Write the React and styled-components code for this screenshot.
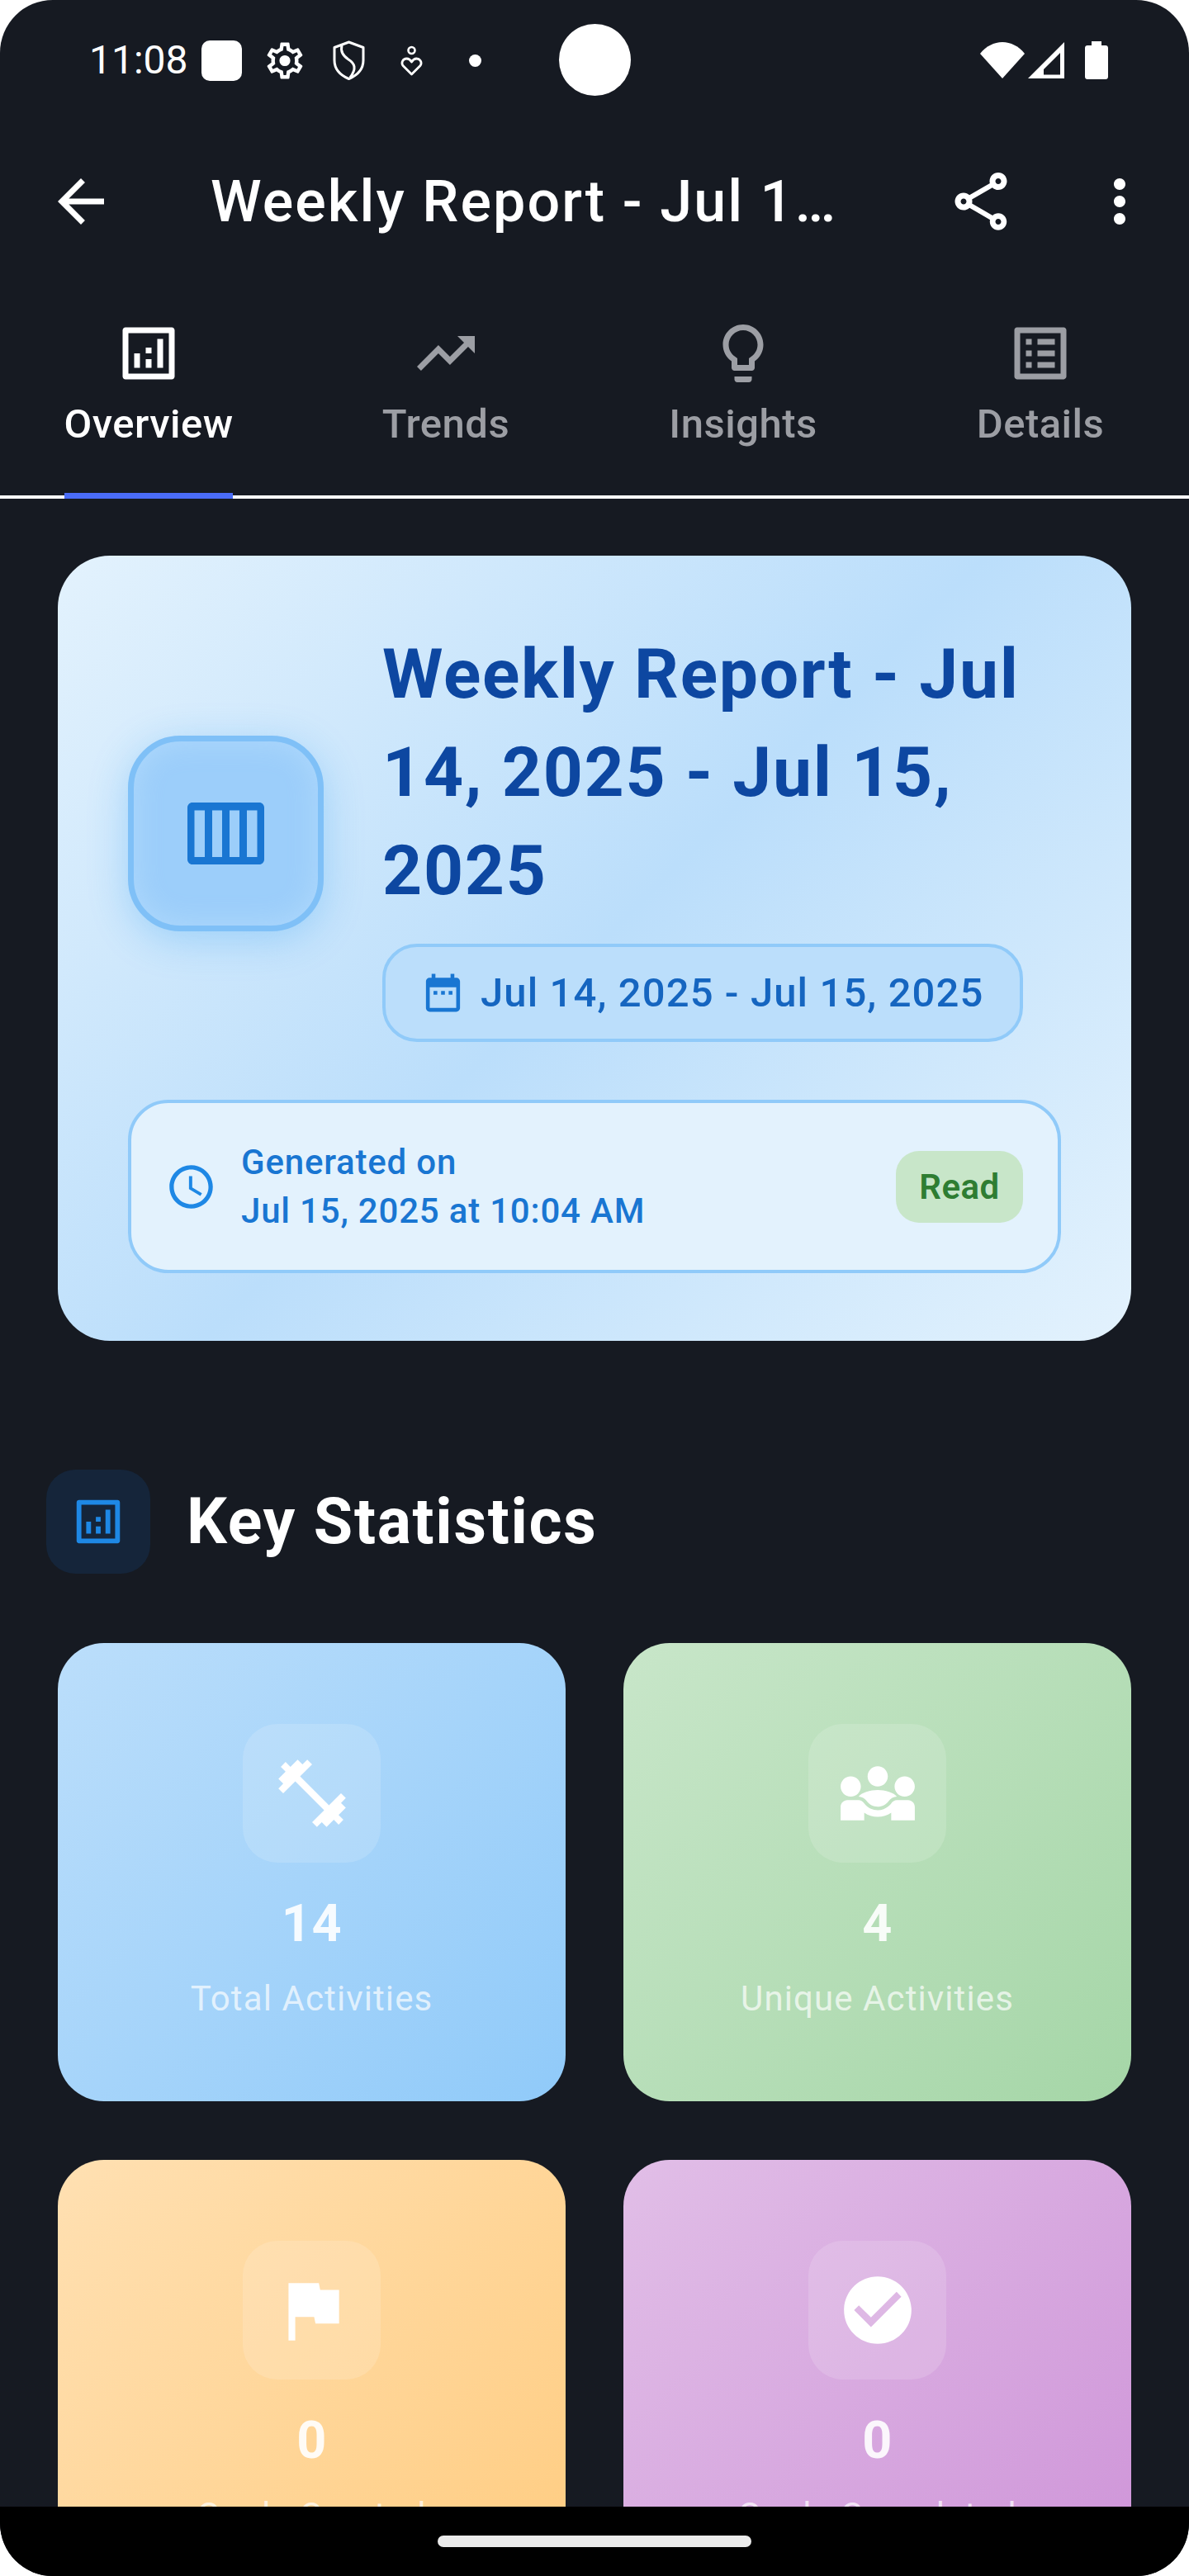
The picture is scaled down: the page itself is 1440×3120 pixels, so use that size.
import React from 'react'
import styled, { createGlobalStyle } from 'styled-components'

const GlobalStyle = createGlobalStyle`
  html, body {
    margin: 0;
    padding: 0;
    background: #fff;
  }
  * {
    box-sizing: border-box;
  }
`

const Phone = styled.div`
  position: relative;
  width: 1440px;
  height: 3120px;
  overflow: hidden;
  border-radius: 64px;
  background: #161a22;
  color: #fff;
  font-family: Roboto, "Noto Sans", sans-serif;
`

const Glyph = styled.svg`
  display: block;
  flex: none;
  width: ${p => p.$w}px;
  height: ${p => p.$h || p.$w}px;
  margin-left: ${p => p.$ml || 0}px;
  fill: ${p => p.$color || '#fff'};
`

const StatusBar = styled.div`
  display: flex;
  align-items: center;
  height: 146px;
  padding: 0 98px 0 108px;
`

const Time = styled.span`
  font-size: 48px;
  line-height: 56px;
  width: 120px;
`

const NotifSquare = styled.span`
  width: 49px;
  height: 49px;
  margin-left: 16px;
  border-radius: 10px;
  background: #fff;
`

const NotifDot = styled.span`
  width: 15px;
  height: 15px;
  margin-left: 56px;
  border-radius: 50%;
  background: #fff;
`

const Camera = styled.div`
  position: absolute;
  left: 677px;
  top: 29px;
  width: 87px;
  height: 87px;
  border-radius: 50%;
  background: #fff;
`

const StatusRight = styled.div`
  display: flex;
  align-items: center;
  margin-left: auto;
`

const AppBar = styled.div`
  display: flex;
  align-items: center;
  height: 196px;
  padding: 0 42px 0 56px;
`

const AppTitle = styled.div`
  width: 752px;
  margin-left: 115px;
  margin-right: 139px;
  white-space: nowrap;
  font-size: 70px;
  font-weight: 500;
  line-height: 84px;
  letter-spacing: 2.1px;
`

const TabBar = styled.div`
  display: grid;
  grid-template-columns: repeat(4, 1fr);
  height: 262px;
  border-bottom: 4px solid #fff;
`

const Tab = styled.div`
  position: relative;
  display: flex;
  flex-direction: column;
  align-items: center;
  padding-top: 44px;
  color: ${p => (p.$active ? '#fff' : '#9c9ea4')};
`

const TabLabel = styled.span`
  margin-top: 12px;
  font-size: 49px;
  font-weight: 500;
  line-height: 64px;
  letter-spacing: 0.5px;
`

const TabIndicator = styled.span`
  position: absolute;
  left: 78px;
  bottom: -4px;
  width: 204px;
  height: 7px;
  background: #4a6cf7;
`

const HeroCard = styled.section`
  margin: 69px 70px 0;
  padding: 84px 85px 82px;
  height: 951px;
  border-radius: 63px;
  background: linear-gradient(135deg, #e3f2fd 0%, #bbdefb 50%, #e3f2fd 100%);
`

const HeroTop = styled.div`
  display: flex;
  align-items: center;
`

const HeroIcon = styled.div`
  display: flex;
  flex: none;
  align-items: center;
  justify-content: center;
  width: 237px;
  height: 237px;
  border: 7px solid #7fc0f7;
  border-radius: 63px;
  background: #9ccefa;
  box-shadow: inset 0 0 36px rgba(200, 230, 255, 0.45), 0 10px 48px rgba(33, 150, 243, 0.28);
`

const HeroText = styled.div`
  display: flex;
  flex-direction: column;
  align-items: flex-start;
  margin-left: 71px;
  width: 822px;
`

const HeroTitle = styled.h1`
  margin: 0;
  font-size: 84px;
  font-weight: 700;
  line-height: 119px;
  letter-spacing: 1.7px;
  color: #0d47a1;
`

const DateChip = styled.div`
  display: flex;
  align-items: center;
  height: 119px;
  margin-top: 29px;
  padding: 0 44px 0 42px;
  border: 4px solid #90caf9;
  border-radius: 42px;
  background: #bbdefb;
  font-size: 49px;
  font-weight: 500;
  color: #1565c0;
`

const ChipText = styled.span`
  margin-left: 18px;
  letter-spacing: 1.1px;
`

const InfoBox = styled.div`
  display: flex;
  align-items: center;
  height: 210px;
  margin-top: 70px;
  padding: 0 42px 0 41px;
  border: 4px solid #90caf9;
  border-radius: 49px;
  background: #e3f2fd;
`

const InfoText = styled.div`
  margin-left: 29px;
  font-size: 42px;
  font-weight: 500;
  line-height: 59px;
  letter-spacing: 0.8px;
  color: #1976d2;
`

const ReadBadge = styled.span`
  display: flex;
  align-items: center;
  justify-content: center;
  width: 154px;
  height: 87px;
  margin-left: auto;
  border-radius: 28px;
  background: #c8e6c9;
  font-size: 42px;
  font-weight: 600;
  letter-spacing: 0.5px;
  color: #2e7d32;
`

const SectionHeader = styled.div`
  display: flex;
  align-items: center;
  margin: 156px 56px 0;
`

const SectionIcon = styled.div`
  display: flex;
  align-items: center;
  justify-content: center;
  width: 126px;
  height: 126px;
  border-radius: 35px;
  background: #15253a;
`

const SectionTitle = styled.h2`
  margin: 0 0 0 44px;
  font-size: 77px;
  font-weight: 700;
  line-height: 90px;
  letter-spacing: 1.7px;
`

const StatGrid = styled.div`
  display: grid;
  grid-template-columns: repeat(2, 615px);
  gap: 71px 70px;
  margin: 84px 70px 0;
`

const StatCard = styled.div`
  display: flex;
  flex-direction: column;
  align-items: center;
  height: 555px;
  padding-top: 98px;
  border-radius: 56px;
  background: linear-gradient(135deg, ${p => p.$from}, ${p => p.$to});
`

const StatIcon = styled.div`
  display: flex;
  align-items: center;
  justify-content: center;
  width: 167px;
  height: 168px;
  border-radius: 42px;
  background: rgba(255, 255, 255, 0.15);
`

const StatValue = styled.div`
  margin-top: 32px;
  font-size: 63px;
  font-weight: 700;
  line-height: 84px;
  letter-spacing: 0.5px;
  color: rgba(255, 255, 255, 0.9);
`

const StatLabel = styled.div`
  margin-top: 21px;
  font-size: 42px;
  line-height: 56px;
  letter-spacing: 1.1px;
  color: rgba(255, 255, 255, 0.7);
`

const NavBar = styled.div`
  position: absolute;
  left: 0;
  right: 0;
  bottom: 0;
  display: flex;
  align-items: center;
  justify-content: center;
  height: 84px;
  background: #000;
`

const NavHandle = styled.span`
  width: 380px;
  height: 14px;
  border-radius: 7px;
  background: #ebebeb;
`

const paths = {
  back: 'M20 11H7.83l5.59-5.59L12 4l-8 8 8 8 1.41-1.41L7.83 13H20v-2z',
  share: 'M18 16.08c-.76 0-1.44.3-1.96.77L8.91 12.7c.05-.23.09-.46.09-.7s-.04-.47-.09-.7l7.05-4.11c.54.5 1.25.81 2.04.81 1.66 0 3-1.34 3-3s-1.34-3-3-3-3 1.34-3 3c0 .24.04.47.09.7L8.04 9.81C7.5 9.31 6.79 9 6 9c-1.66 0-3 1.34-3 3s1.34 3 3 3c.79 0 1.5-.31 2.04-.81l7.12 4.16c-.05.21-.08.43-.08.65 0 1.61 1.31 2.92 2.92 2.92s2.92-1.31 2.92-2.92-1.31-2.92-2.92-2.92zM18 4c.55 0 1 .45 1 1s-.45 1-1 1-1-.45-1-1 .45-1 1-1zM6 13c-.55 0-1-.45-1-1s.45-1 1-1 1 .45 1 1-.45 1-1 1zm12 7.02c-.55 0-1-.45-1-1s.45-1 1-1 1 .45 1 1-.45 1-1 1z',
  more: 'M12 8c1.1 0 2-.9 2-2s-.9-2-2-2-2 .9-2 2 .9 2 2 2zm0 2c-1.1 0-2 .9-2 2s.9 2 2 2 2-.9 2-2-.9-2-2-2zm0 6c-1.1 0-2 .9-2 2s.9 2 2 2 2-.9 2-2-.9-2-2-2z',
  analytics: 'M20 3H4c-.55 0-1 .45-1 1v16c0 .55.45 1 1 1h16c.55 0 1-.45 1-1V4c0-.55-.45-1-1-1zm-1 16H5V5h14v14zM7 12h2v5H7zM15 7h2v10h-2zM11 14h2v3h-2zM11 10h2v2h-2z',
  trend: 'M16 6l2.29 2.29-4.88 4.88-4-4L2 16.59 3.41 18l6-6 4 4 6.3-6.29L22 12V6z',
  bulb: 'M9 21c0 .55.45 1 1 1h4c.55 0 1-.45 1-1v-1H9v1zm3-19C8.14 2 5 5.14 5 9c0 2.38 1.19 4.47 3 5.74V17c0 .55.45 1 1 1h6c.55 0 1-.45 1-1v-2.26c1.81-1.27 3-3.36 3-5.74 0-3.86-3.14-7-7-7zm2.85 11.1l-.85.6V16h-4v-2.3l-.85-.6C7.8 12.16 7 10.63 7 9c0-2.76 2.24-5 5-5s5 2.24 5 5c0 1.63-.8 3.16-2.15 4.1z',
  list: 'M19 5v14H5V5h14m1.1-2H3.9c-.5 0-.9.4-.9.9v16.2c0 .4.4.9.9.9h16.2c.4 0 .9-.5.9-.9V3.9c0-.5-.5-.9-.9-.9zM11 7h6v2h-6V7zm0 4h6v2h-6v-2zm0 4h6v2h-6zM7 7h2v2H7zm0 4h2v2H7zm0 4h2v2H7z',
  calendar: 'M7 11h2v2H7zm4 0h2v2h-2zm4 0h2v2h-2zM19 4h-1V2h-2v2H8V2H6v2H5c-1.11 0-1.99.9-1.99 2L3 20c0 1.1.89 2 2 2h14c1.1 0 2-.9 2-2V6c0-1.1-.9-2-2-2zm0 16H5V9h14v11z',
  clock: 'M11.99 2C6.47 2 2 6.48 2 12s4.47 10 9.99 10C17.52 22 22 17.52 22 12S17.52 2 11.99 2zM12 20c-4.42 0-8-3.58-8-8s3.58-8 8-8 8 3.58 8 8-3.58 8-8 8zM12.5 7H11v6l5.25 3.15.75-1.23-4.5-2.67z',
  fitness: 'M20.57 14.86L22 13.43 20.57 12 17 15.57 8.43 7 12 3.43 10.57 2 9.14 3.43 7.71 2 5.57 4.14 4.14 2.71 2.71 4.14l1.43 1.43L2 7.71l1.43 1.43L2 10.57 3.43 12 7 8.43 15.57 17 12 20.57 13.43 22l1.43-1.43L16.29 22l2.14-2.14 1.43 1.43 1.43-1.43-1.43-1.43L22 16.29z',
  people: 'M6.32 13.01c.96.02 1.85.5 2.45 1.34C9.5 15.38 10.71 16 12 16c1.29 0 2.5-.62 3.23-1.66.6-.84 1.49-1.32 2.45-1.34-.72-1.22-3.6-2-5.68-2-2.07 0-4.96.78-5.68 2.01zM4 13c1.66 0 3-1.34 3-3S5.66 7 4 7s-3 1.34-3 3 1.34 3 3 3zm16 0c1.66 0 3-1.34 3-3s-1.34-3-3-3-3 1.34-3 3 1.34 3 3 3zm-8-3c1.66 0 3-1.34 3-3s-1.34-3-3-3-3 1.34-3 3 1.34 3 3 3zM21 14h-3.27c-.77 0-1.35.45-1.68.92-.04.06-1.36 2.08-4.05 2.08-1.43 0-3.03-.64-4.05-2.08-.39-.55-1-.92-1.68-.92H3c-1.1 0-2 .9-2 2v4h7v-2.26c1.15.8 2.54 1.26 4 1.26s2.85-.46 4-1.26V20h7v-4c0-1.1-.9-2-2-2z',
  flag: 'M14.4 6L14 4H5v17h2v-7h5.6l.4 2h7V6z',
  check: 'M12 2C6.48 2 2 6.48 2 12s4.48 10 10 10 10-4.48 10-10S17.52 2 12 2zm-2 15l-5-5 1.41-1.41L10 14.17l7.59-7.59L19 8l-9 9z',
  gear: 'M19.43 12.98c.04-.32.07-.64.07-.98 0-.34-.03-.66-.07-.98l2.11-1.65c.19-.15.24-.42.12-.64l-2-3.46c-.09-.16-.26-.25-.44-.25-.06 0-.12.01-.17.03l-2.49 1c-.52-.4-1.08-.73-1.69-.98l-.38-2.65C14.46 2.18 14.25 2 14 2h-4c-.25 0-.46.18-.49.42l-.38 2.65c-.61.25-1.17.59-1.69.98l-2.49-1c-.06-.02-.12-.03-.18-.03-.17 0-.34.09-.43.25l-2 3.46c-.13.22-.07.49.12.64l2.11 1.65c-.04.32-.07.65-.07.98 0 .33.03.66.07.98l-2.11 1.65c-.19.15-.24.42-.12.64l2 3.46c.09.16.26.25.44.25.06 0 .12-.01.17-.03l2.49-1c.52.4 1.08.73 1.69.98l.38 2.65c.03.24.24.42.49.42h4c.25 0 .46-.18.49-.42l.38-2.65c.61-.25 1.17-.59 1.69-.98l2.49 1c.06.02.12.03.18.03.17 0 .34-.09.43-.25l2-3.46c.12-.22.07-.49-.12-.64l-2.11-1.65zm-1.98-1.71c.04.31.05.52.05.73 0 .21-.02.43-.05.73l-.14 1.13.89.7 1.08.84-.7 1.21-1.27-.51-1.04-.42-.9.68c-.43.32-.84.56-1.25.73l-1.06.43-.16 1.13-.2 1.35h-1.4l-.19-1.35-.16-1.13-1.06-.43c-.43-.18-.83-.41-1.23-.71l-.91-.7-1.06.43-1.27.51-.7-1.21 1.08-.84.89-.7-.14-1.13c-.03-.31-.05-.54-.05-.74s.02-.43.05-.73l.14-1.13-.89-.7-1.08-.84.7-1.21 1.27.51 1.04.42.9-.68c.43-.32.84-.56 1.25-.73l1.06-.43.16-1.13.2-1.35h1.39l.19 1.35.16 1.13 1.06.43c.43.18.83.41 1.23.71l.91.7 1.06-.43 1.27-.51.7 1.21-1.07.85-.89.7.14 1.13zM12 9a3 3 0 1 0 0 6 3 3 0 0 0 0-6z',
}

const Icon = ({ name, size, color }) => (
  <Glyph viewBox="0 0 24 24" $w={size} $color={color}>
    <path d={paths[name]} />
  </Glyph>
)

const tabs = [
  { icon: 'analytics', label: 'Overview', active: true },
  { icon: 'trend', label: 'Trends' },
  { icon: 'bulb', label: 'Insights' },
  { icon: 'list', label: 'Details' },
]

const stats = [
  { icon: 'fitness', value: '14', label: 'Total Activities', from: '#bbdefb', to: '#90caf9' },
  { icon: 'people', value: '4', label: 'Unique Activities', from: '#c8e6c9', to: '#a5d6a7' },
  { icon: 'flag', value: '0', label: 'Goals Created', from: '#ffe0b2', to: '#ffcc80' },
  { icon: 'check', value: '0', label: 'Goals Completed', from: '#e1bee7', to: '#ce93d8' },
]

const StatusBarRow = () => (
  <StatusBar>
    <Time>11:08</Time>
    <NotifSquare />
    <Glyph viewBox="2 2 20 20" $w={44} $h={45} $ml={30}>
      <path d={paths.gear} />
    </Glyph>
    <Glyph viewBox="0 0 39 48" $w={39} $h={48} $ml={36}>
      <path d="M19.5 2 L37 8.5 V24 C37 35 29 42.5 19.5 46.5 C10 42.5 2 35 2 24 V8.5 Z" fill="none" stroke="#fff" strokeWidth="3" strokeLinejoin="round" />
      <path d="M11 6 C9 14 13 19 19 23 C27 28 29 34 21 45" fill="none" stroke="#fff" strokeWidth="3" />
    </Glyph>
    <Glyph viewBox="0 0 27 37" $w={27} $h={37} $ml={43}>
      <circle cx="13.5" cy="6" r="4" fill="none" stroke="#fff" strokeWidth="2.6" />
      <path d="M13.5 35 L3 24.5 C0.5 21 3 16 7.5 16 C10 16 12 17.5 13.5 20 C15 17.5 17 16 19.5 16 C24 16 26.5 21 24 24.5 Z" fill="none" stroke="#fff" strokeWidth="2.8" strokeLinejoin="round" />
    </Glyph>
    <NotifDot />
    <StatusRight>
      <Glyph viewBox="0 0 54 44" $w={54} $h={44}>
        <path d="M27 44 L0 14 C7 5 17 0 27 0 C37 0 47 5 54 14 Z" />
      </Glyph>
      <Glyph viewBox="0 0 44 44" $w={44} $h={44} $ml={4}>
        <path fillRule="evenodd" d="M0 44 L44 0 V44 Z M19 39.5 H39 V13 L19 33 Z" />
      </Glyph>
      <Glyph viewBox="0 0 28 46" $w={28} $h={46} $ml={25}>
        <path d="M8 0 H20 V5 H25 C26.7 5 28 6.3 28 8 V43 C28 44.7 26.7 46 25 46 H3 C1.3 46 0 44.7 0 43 V8 C0 6.3 1.3 5 3 5 H8 Z" />
      </Glyph>
    </StatusRight>
  </StatusBar>
)

const App = () => (
  <Phone>
    <GlobalStyle />
    <StatusBarRow />
    <Camera />
    <AppBar>
      <Icon name="back" size={84} />
      <AppTitle>Weekly Report - Jul 1…</AppTitle>
      <Icon name="share" size={84} />
      <Glyph viewBox="0 0 24 24" $w={84} $ml={84}>
        <path d={paths.more} />
      </Glyph>
    </AppBar>
    <TabBar>
      {tabs.map(t => (
        <Tab key={t.label} $active={t.active}>
          <Icon name={t.icon} size={84} color={t.active ? '#fff' : '#9c9ea4'} />
          <TabLabel>{t.label}</TabLabel>
          {t.active && <TabIndicator />}
        </Tab>
      ))}
    </TabBar>
    <HeroCard>
      <HeroTop>
        <HeroIcon>
          <Glyph viewBox="0 0 93 75" $w={93} $h={75} $color="#1976d2">
            <path fillRule="evenodd" d="M6 0 H87 C90.3 0 93 2.7 93 6 V69 C93 72.3 90.3 75 87 75 H6 C2.7 75 0 72.3 0 69 V6 C0 2.7 2.7 0 6 0 Z M8.5 9.5 V66 H21 V9.5 Z M30 9.5 V66 H42 V9.5 Z M51 9.5 V66 H63 V9.5 Z M72 9.5 V66 H84.5 V9.5 Z" />
          </Glyph>
        </HeroIcon>
        <HeroText>
          <HeroTitle>Weekly Report - Jul 14, 2025 - Jul 15, 2025</HeroTitle>
          <DateChip>
            <Icon name="calendar" size={55} color="#1976d2" />
            <ChipText>Jul 14, 2025 - Jul 15, 2025</ChipText>
          </DateChip>
        </HeroText>
      </HeroTop>
      <InfoBox>
        <Icon name="clock" size={63} color="#1e88e5" />
        <InfoText>
          Generated on
          <br />
          Jul 15, 2025 at 10:04 AM
        </InfoText>
        <ReadBadge>Read</ReadBadge>
      </InfoBox>
    </HeroCard>
    <SectionHeader>
      <SectionIcon>
        <Icon name="analytics" size={70} color="#1e88e5" />
      </SectionIcon>
      <SectionTitle>Key Statistics</SectionTitle>
    </SectionHeader>
    <StatGrid>
      {stats.map(s => (
        <StatCard key={s.label} $from={s.from} $to={s.to}>
          <StatIcon>
            <Icon name={s.icon} size={98} />
          </StatIcon>
          <StatValue>{s.value}</StatValue>
          <StatLabel>{s.label}</StatLabel>
        </StatCard>
      ))}
    </StatGrid>
    <NavBar>
      <NavHandle />
    </NavBar>
  </Phone>
)

export default App
